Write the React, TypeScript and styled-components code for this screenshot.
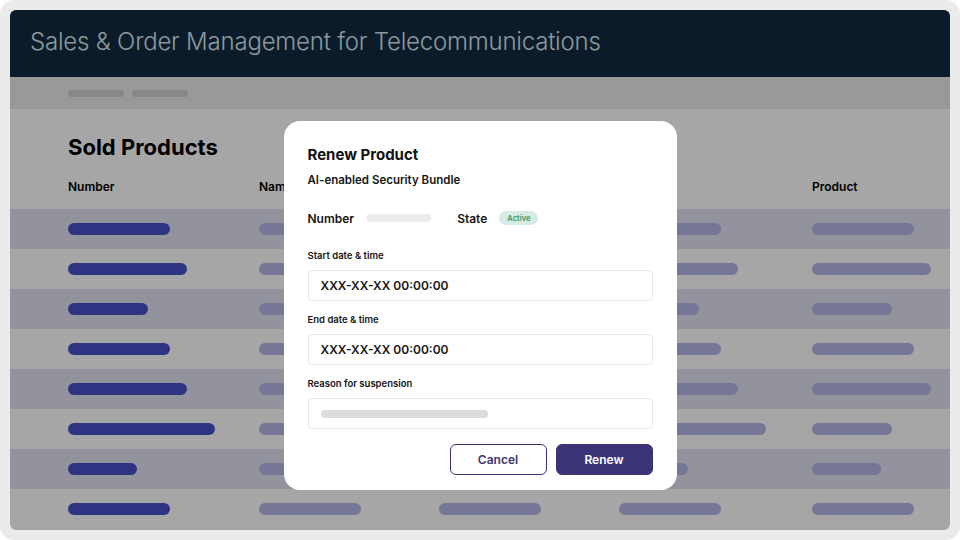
import React from 'react';
import styled, { createGlobalStyle } from 'styled-components';

const GlobalStyle = createGlobalStyle`
  html, body {
    margin: 0;
    padding: 0;
    background: #ffffff;
  }
  * {
    box-sizing: border-box;
  }
  body {
    font-family: 'Inter', 'Lato', sans-serif;
    color: #111111;
  }
`

type RowData = {
  number: number
  name: number
  type: number
  status: number
  product: number
}

const rows: RowData[] = [
  { number: 102, name: 102, type: 102, status: 102, product: 102 },
  { number: 119, name: 119, type: 119, status: 119, product: 119 },
  { number: 80, name: 80, type: 80, status: 80, product: 80 },
  { number: 102, name: 102, type: 102, status: 102, product: 102 },
  { number: 119, name: 119, type: 119, status: 119, product: 119 },
  { number: 147, name: 147, type: 147, status: 147, product: 80 },
  { number: 69, name: 69, type: 69, status: 69, product: 69 },
  { number: 102, name: 102, type: 102, status: 102, product: 102 },
]

const App = () => {
  return (
    <>
      <GlobalStyle />
      <Frame>
        <AppPanel>
          <Header>
            <Title>Sales &amp; Order Management for Telecommunications</Title>
          </Header>
          <Breadcrumbs>
            <Crumb />
            <Crumb />
          </Breadcrumbs>
          <Content>
            <PageTitle>Sold Products</PageTitle>
            <HeadRow>
              <HeadCell>Number</HeadCell>
              <HeadCell>Name</HeadCell>
              <HeadCell />
              <HeadCell />
              <HeadCell>Product</HeadCell>
            </HeadRow>
            {rows.map((row, i) => (
              <Row key={i} striped={i % 2 === 0}>
                <Cell><Bar primary style={{ width: row.number }} /></Cell>
                <Cell><Bar style={{ width: row.name }} /></Cell>
                <Cell><Bar style={{ width: row.type }} /></Cell>
                <Cell><Bar style={{ width: row.status }} /></Cell>
                <Cell><Bar style={{ width: row.product }} /></Cell>
              </Row>
            ))}
          </Content>

          <Backdrop>
            <Modal>
              <ModalTitle>Renew Product</ModalTitle>
              <ModalSubtitle>AI-enabled Security Bundle</ModalSubtitle>
              <InfoRow>
                <InfoLabel>Number</InfoLabel>
                <Placeholder width={65} />
                <InfoLabel>State</InfoLabel>
                <Badge>Active</Badge>
              </InfoRow>

              <FieldLabel>Start date &amp; time</FieldLabel>
              <Field>XXX-XX-XX 00:00:00</Field>

              <FieldLabel>End date &amp; time</FieldLabel>
              <Field>XXX-XX-XX 00:00:00</Field>

              <FieldLabel>Reason for suspension</FieldLabel>
              <Field>
                <Placeholder width={167} tone="#dcdcdc" />
              </Field>

              <Actions>
                <Button>Cancel</Button>
                <Button primary>Renew</Button>
              </Actions>
            </Modal>
          </Backdrop>
        </AppPanel>
      </Frame>
    </>
  )
}

const Frame = styled.div`
  width: 960px;
  height: 540px;
  padding: 10px;
  background: #ebebeb;
  border-radius: 14px;
`

const AppPanel = styled.div`
  position: relative;
  height: 100%;
  display: flex;
  flex-direction: column;
  background: #ffffff;
  border-radius: 6px;
  overflow: hidden;
`

const Header = styled.header`
  height: 67px;
  flex-shrink: 0;
  display: flex;
  align-items: center;
  padding: 0 20px 4px;
  background: #112a3f;
`

const Title = styled.h1`
  margin: 0;
  font-size: 24px;
  font-weight: 300;
  letter-spacing: -0.2px;
  color: #d8e8f2;
`

const Breadcrumbs = styled.nav`
  height: 32px;
  flex-shrink: 0;
  display: flex;
  align-items: center;
  gap: 8px;
  padding-left: 58px;
  background: #ececec;
`

const Crumb = styled.span`
  width: 56px;
  height: 7px;
  border-radius: 4px;
  background: #d2d2d2;
`

const Content = styled.main`
  flex: 1;
  padding-top: 24px;
`

const PageTitle = styled.h2`
  margin: 0 0 10px 58px;
  font-size: 22px;
  line-height: 28px;
  font-weight: 700;
  color: #000000;
`

const columns = '191px 180px 180px 193px 1fr'

const HeadRow = styled.div`
  height: 38px;
  display: grid;
  grid-template-columns: ${columns};
  align-items: center;
  padding: 0 0 8px 58px;
`

const HeadCell = styled.div`
  font-size: 12px;
  font-weight: 600;
  color: #000000;
`

const Row = styled.div<{ striped?: boolean }>`
  height: 40px;
  display: grid;
  grid-template-columns: ${columns};
  align-items: center;
  padding-left: 58px;
  background: ${props => props.striped ? '#e2e2f3' : '#ffffff'};
`

const Cell = styled.div`
  display: flex;
  align-items: center;
`

const Bar = styled.span<{ primary?: boolean }>`
  display: block;
  height: 12px;
  border-radius: 6px;
  background: ${props => props.primary ? '#4851c6' : '#b6b6e8'};
`

const Backdrop = styled.div`
  position: absolute;
  inset: 0;
  display: flex;
  justify-content: center;
  align-items: flex-start;
  padding-top: 111px;
  background: rgba(0, 0, 0, 0.35);
`

const Modal = styled.div`
  width: 393px;
  padding: 24px 24px 15px;
  display: flex;
  flex-direction: column;
  background: #ffffff;
  border-radius: 16px;
`

const ModalTitle = styled.h3`
  margin: 0;
  font-size: 15px;
  line-height: 20px;
  font-weight: 700;
  color: #111111;
`

const ModalSubtitle = styled.div`
  margin-top: 7px;
  font-size: 11.5px;
  line-height: 16px;
  font-weight: 600;
  color: #151515;
`

const InfoRow = styled.div`
  margin-top: 22px;
  height: 16px;
  display: flex;
  align-items: center;
`

const InfoLabel = styled.span`
  font-size: 12px;
  font-weight: 600;
  color: #151515;
  margin-right: 12px;
`

const Placeholder = styled.span<{ width: number, tone?: string }>`
  width: ${props => props.width}px;
  height: 8px;
  border-radius: 4px;
  background: ${props => props.tone || '#ececec'};
  margin-right: 26px;
`

const Badge = styled.span`
  height: 14px;
  padding: 0 8px;
  display: inline-flex;
  align-items: center;
  border-radius: 7px;
  background: #d7ede3;
  color: #3b9467;
  font-size: 7.5px;
  font-weight: 600;
`

const FieldLabel = styled.label`
  margin-top: 23px;
  font-size: 9.5px;
  line-height: 14px;
  font-weight: 600;
  color: #151515;

  & ~ & {
    margin-top: 12px;
  }
`

const Field = styled.div`
  margin-top: 7px;
  height: 31px;
  display: flex;
  align-items: center;
  padding: 0 12px;
  border: 1px solid #e8e8e8;
  border-radius: 4px;
  font-size: 12px;
  font-weight: 600;
  color: #151515;
`

const Actions = styled.div`
  margin-top: 15px;
  display: flex;
  justify-content: flex-end;
  gap: 9px;
`

const Button = styled.button<{ primary?: boolean }>`
  width: 97px;
  height: 31px;
  border-radius: 6px;
  border: 1px solid #393470;
  background: ${props => props.primary ? '#3b3578' : '#ffffff'};
  color: ${props => props.primary ? '#ffffff' : '#393470'};
  font-family: inherit;
  font-size: 12px;
  font-weight: 600;
  cursor: pointer;
`

export default App;
